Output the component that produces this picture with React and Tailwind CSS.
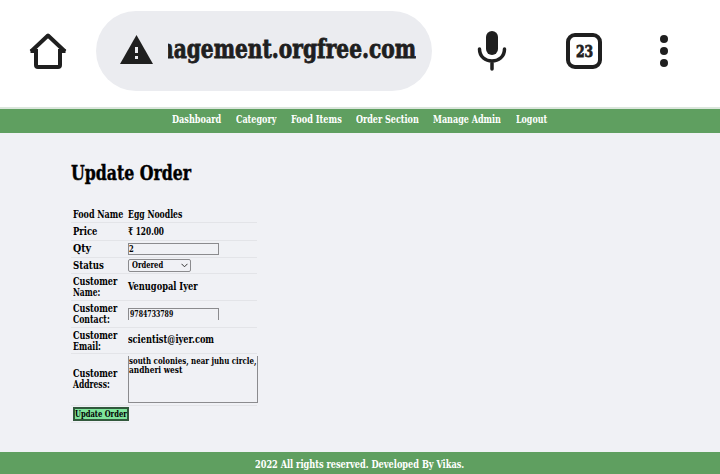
import { useLayoutEffect, useRef, useState } from "react";

// Condenses one line of display text to the width of its box.
function Fit({ children, className }) {
  const box = useRef(null);
  const line = useRef(null);
  const [scale, setScale] = useState(1);
  useLayoutEffect(() => {
    setScale(box.current.clientWidth / line.current.offsetWidth);
  }, [children]);
  return (
    <span ref={box} className={"block whitespace-nowrap " + className}>
      <span ref={line} className="inline-block origin-left" style={{ transform: `scaleX(${scale})` }}>
        {children}
      </span>
    </span>
  );
}

function Row({ label, height, children }) {
  return (
    <div className={"flex items-center border-b border-[#e3e4e8] pl-[2px] " + height}>
      <div className="w-[55px] shrink-0">{label}</div>
      {children}
    </div>
  );
}

export default function App() {
  return (
    <div className="flex h-[474px] w-[720px] flex-col overflow-hidden bg-[#f0f1f5] font-['DejaVu_Serif_Condensed','DejaVu_Serif',serif] font-bold text-black">
      <header className="flex h-[107px] shrink-0 bg-white text-[#1f1f1f]">
        <svg className="ml-[28px] mt-[30px] h-[42px] w-[40px] shrink-0" viewBox="28 30 40 42" fill="none" stroke="#1f1f1f" strokeWidth="4" strokeLinejoin="round">
          <path d="M31 51.500 48 35.500 65 51.500" />
          <path d="M30.500 51H36V65Q36 67 38 67H58Q60 67 60 65V51H65.500" strokeLinejoin="miter" />
        </svg>
        <div className="ml-[28px] mt-[11px] flex h-[80px] w-[336px] shrink-0 rounded-full bg-[#ebecf0]">
          <svg className="ml-[24px] mt-[24px] h-[29px] w-[33px] shrink-0" viewBox="0 0 33 29">
            <path d="M16.500 0 33 29H0Z" fill="#1f1f1f" />
            <path d="M15 12h3v6h-3zM15 21h3v3h-3z" fill="#ebecf0" />
          </svg>
          <div className="ml-[15px] mt-[17px] flex h-[42px] w-[248px] justify-end overflow-hidden">
            <Fit className="w-[257px] shrink-0 text-[26px] leading-[42px] [-webkit-text-stroke:0.8px_#1f1f1f]">nagement.orgfree.com</Fit>
          </div>
        </div>
        <svg className="ml-[44px] mt-[30px] h-[42px] w-[32px] shrink-0" viewBox="476 30 32 42" fill="none" stroke="#1f1f1f" strokeWidth="3.5" strokeLinecap="round">
          <rect x="486" y="31" width="12" height="24" rx="6" fill="#1f1f1f" stroke="none" />
          <path d="M479.500 49C479.500 65 504.500 65 504.500 49M492 61V69" />
        </svg>
        <div className="ml-[58px] mt-[33px] flex h-[36px] w-[36px] shrink-0 items-center justify-center rounded-[9px] border-4 border-[#1f1f1f]">
          <Fit className="w-[17px] text-[17px] leading-[28px] [-webkit-text-stroke:0.8px_#1f1f1f]">23</Fit>
        </div>
        <svg className="ml-[56px] mt-[33px] h-[36px] w-[12px] shrink-0" viewBox="0 0 12 36" fill="#1f1f1f">
          <circle cx="6" cy="6" r="4" />
          <circle cx="6" cy="18" r="4" />
          <circle cx="6" cy="30" r="4" />
        </svg>
      </header>

      <nav className="flex h-[26px] shrink-0 border-t-2 border-[#dbe6dc] bg-[#5f9f60] pl-[172px] text-[10.500px] leading-[20px] text-white">
        <Fit className="w-[49px]">Dashboard</Fit>
        <Fit className="ml-[15px] w-[40px]">Category</Fit>
        <Fit className="ml-[15px] w-[51px]">Food Items</Fit>
        <Fit className="ml-[14px] w-[63px]">Order Section</Fit>
        <Fit className="ml-[14px] w-[68px]">Manage Admin</Fit>
        <Fit className="ml-[15px] w-[31px]">Logout</Fit>
      </nav>

      <main className="flex h-[319px] shrink-0 flex-col pl-[71px] text-[10.500px] leading-[11px]">
        <h1 className="mt-[25px] h-[30px] text-[20px] leading-[30px] [-webkit-text-stroke:0.4px_black]">
          <Fit className="w-[120px]">Update Order</Fit>
        </h1>
        <section className="mt-[18px] w-[186px]">
          <Row height="h-[17px]" label={<Fit className="w-[50px]">Food Name</Fit>}>
            <Fit className="w-[54px]">Egg Noodles</Fit>
          </Row>
          <Row height="h-[18px]" label={<Fit className="w-[24px]">Price</Fit>}>
            <Fit className="w-[36px]">₹ 120.00</Fit>
          </Row>
          <Row height="h-[17px]" label={<Fit className="w-[18px] pb-px">Qty</Fit>}>
            <div className="h-[12px] w-[91px] border border-[#8b8b8e] text-[9px] leading-[10px]">
              <Fit className="w-[5px]">2</Fit>
            </div>
          </Row>
          <Row height="h-[16px]" label={<Fit className="w-[31px]">Status</Fit>}>
            <div className="flex h-[13px] w-[63px] items-center justify-between rounded-[2px] border border-[#8b8b8e] pl-[3px] pr-[2px] text-[9px]">
              <Fit className="w-[31px]">Ordered</Fit>
              <svg className="h-[5px] w-[7px]" viewBox="0 0 7 5" fill="none" stroke="#333">
                <path d="M.5.8 3.500 3.800 6.500.8" />
              </svg>
            </div>
          </Row>
          <Row height="h-[27px]" label={<><Fit className="w-[44px]">Customer</Fit><Fit className="w-[27px]">Name:</Fit></>}>
            <Fit className="w-[70px] pb-[2px]">Venugopal Iyer</Fit>
          </Row>
          <Row height="h-[27px]" label={<><Fit className="w-[44px]">Customer</Fit><Fit className="w-[37px]">Contact:</Fit></>}>
            <div className="h-[12px] w-[91px] border border-b-0 border-[#8b8b8e] pl-px text-[9px] leading-[10px]">
              <Fit className="w-[43px]">9784733789</Fit>
            </div>
          </Row>
          <Row height="h-[26px]" label={<><Fit className="w-[44px]">Customer</Fit><Fit className="w-[28px]">Email:</Fit></>}>
            <Fit className="w-[86px] pb-[2px]">scientist@iyer.com</Fit>
          </Row>
          <Row height="h-[52px]" label={<div className="pb-px"><Fit className="w-[44px]">Customer</Fit><Fit className="w-[37px]">Address:</Fit></div>}>
            <div className="h-[47px] w-[130px] shrink-0 border border-t-0 border-[#8b8b8e] pt-px text-[9px] leading-[9px]">
              <Fit className="w-[127px]">south colonies, near juhu circle,</Fit>
              <Fit className="w-[53px]">andheri west</Fit>
            </div>
          </Row>
          <div className="ml-[2px] mt-px h-[14px] w-[56px] border-2 border-[#32583c] bg-[#7fe49b] text-[9px] leading-[10px]">
            <Fit className="w-[52px]">Update Order</Fit>
          </div>
          <div className="mt-px w-[56px] border-b border-[#e6e7eb]" />
        </section>
      </main>

      <footer className="h-[22px] shrink-0 bg-[#5f9f60] pl-[255px] text-[10.500px] leading-[24px] text-white">
        <Fit className="w-[209px]">2022 All rights reserved. Developed By Vikas.</Fit>
      </footer>
    </div>
  );
}
